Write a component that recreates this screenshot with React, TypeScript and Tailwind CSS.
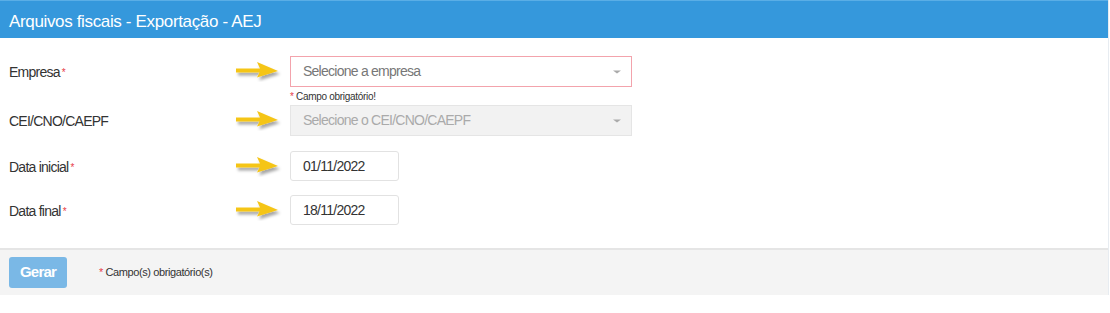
const Arrow = () => (
  <svg width="48" height="22" viewBox="0 0 48 22" className="shrink-0">
    <defs>
      <filter id="sh" x="-20%" y="-40%" width="150%" height="190%">
        <feDropShadow dx="2" dy="3" stdDeviation="1.6" floodColor="#000" floodOpacity="0.35" />
      </filter>
    </defs>
    <path d="M2 8.5 H26 L23 2 L44 11 L23 17.5 L25.5 12.5 H2 Z" fill="#f5c518" filter="url(#sh)" />
  </svg>
)

const Req = () => <span className="relative top-[-1px] ml-[2px] text-[10px] text-[#e73d4a]">*</span>

const Caret = () => (
  <span className="absolute right-[10px] top-1/2 -translate-y-1/2 border-x-[4px] border-t-[3px] border-x-transparent border-t-[#aaa]" />
)

const Row = ({ label, req, children }: { label: string; req?: boolean; children: React.ReactNode }) => (
  <div className="flex items-start">
    <div className="w-[226px] shrink-0 pl-[9px] pt-[6px] text-[14px] tracking-[-0.75px] text-[#333]">
      {label}
      {req && <Req />}
    </div>
    <div className="w-[64px] shrink-0 pl-[8px] pt-[4px]">
      <Arrow />
    </div>
    {children}
  </div>
)

const App = () => {
  return (
    <div className="w-[1110px] h-[313px] bg-white font-['Liberation_Sans',Arial,sans-serif]">
      <div className="w-[1109px] border-r border-[#e7ecf1]">
        <div className="h-[38px] bg-[#3598dc] border-t border-[#5aaee6] pl-[9px] pt-[8px] text-[17px] tracking-[-0.35px] text-white">
          Arquivos fiscais - Exportação - AEJ
        </div>

        <div className="h-[210px] pt-[18px] flex flex-col">
          <Row label="Empresa" req>
            <div>
              <div className="relative w-[342px] h-[31px] border border-[#f3a3ac] bg-white pl-[12px] flex items-center text-[14px] tracking-[-0.75px] text-[#777]">
                Selecione a empresa
                <Caret />
              </div>
              <div className="mt-[2px] text-[10px] tracking-[-0.3px] text-[#333]">
                <span className="text-[#e73d4a]">*</span> Campo obrigatório!
              </div>
            </div>
          </Row>

          <div className="mt-[1px]">
            <Row label="CEI/CNO/CAEPF">
              <div className="relative w-[342px] h-[31px] border border-[#e5e5e5] bg-[#f2f2f2] pl-[12px] flex items-center text-[14px] tracking-[-0.75px] text-[#aaa]">
                Selecione o CEI/CNO/CAEPF
                <Caret />
              </div>
            </Row>
          </div>

          <div className="mt-[15px]">
            <Row label="Data inicial" req>
              <div className="w-[109px] h-[30px] border border-[#e2e2e2] rounded-[3px] pl-[12px] flex items-center text-[14px] tracking-[-0.75px] text-[#333]">
                01/11/2022
              </div>
            </Row>
          </div>

          <div className="mt-[14px]">
            <Row label="Data final" req>
              <div className="w-[109px] h-[30px] border border-[#e2e2e2] rounded-[3px] pl-[12px] flex items-center text-[14px] tracking-[-0.75px] text-[#333]">
                18/11/2022
              </div>
            </Row>
          </div>
        </div>

        <div className="h-[47px] bg-[#f4f4f4] border-t-2 border-[#e5e5e5] flex items-center pl-[9px]">
          <button className="w-[58px] h-[31px] rounded-[3px] bg-[#7ab8e6] text-white text-[15px] tracking-[-0.8px] font-bold">
            Gerar
          </button>
          <div className="ml-[32px] text-[11px] tracking-[-0.4px] text-[#333]">
            <span className="text-[#e73d4a]">*</span> Campo(s) obrigatório(s)
          </div>
        </div>
      </div>
    </div>
  )
}

export default App
